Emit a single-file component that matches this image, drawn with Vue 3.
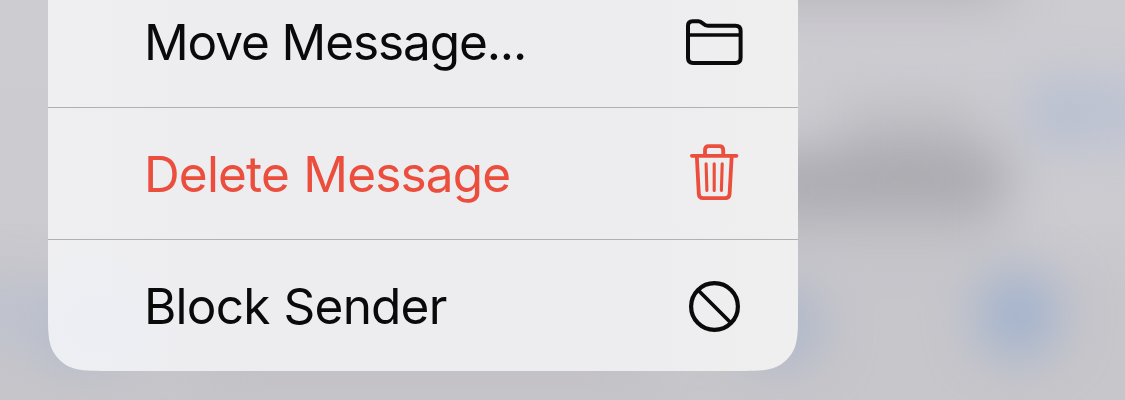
<script setup>
const items = [
  { label: 'Move Message...', icon: 'folder', cls: 'move' },
  { label: 'Delete Message', icon: 'trash', cls: 'delete' },
  { label: 'Block Sender', icon: 'block', cls: 'block' },
]
</script>

<template>
  <main class="screen">
    <svg class="backdrop" viewBox="0 0 1125 400" aria-hidden="true">
      <defs>
        <filter id="soft" x="-150%" y="-150%" width="400%" height="400%" color-interpolation-filters="sRGB">
          <feGaussianBlur stdDeviation="26" />
        </filter>
      </defs>
      <g filter="url(#soft)">
        <rect x="740" y="-60" width="270" height="60" fill="#b3b2b7" />
        <rect x="840" y="105" width="140" height="50" fill="#bcbbc0" />
        <rect x="750" y="155" width="258" height="44" fill="#a5a4aa" />
        <rect x="750" y="199" width="250" height="46" fill="#bcbbc0" />
        <rect x="1030" y="82" width="150" height="60" fill="#b6bfd3" opacity="0.75" />
        <ellipse cx="1056" cy="114" rx="22" ry="24" fill="#a9b6d0" opacity="0.7" />
        <ellipse cx="1018" cy="315" rx="40" ry="42" fill="#9fb1cd" />
        <ellipse cx="780" cy="326" rx="42" ry="38" fill="#aab5c9" />
        <ellipse cx="85" cy="332" rx="52" ry="34" fill="#b2bacb" />
        <rect x="-60" y="285" width="110" height="54" fill="#b9c0d0" opacity="0.7" />
        <rect x="200" y="350" width="450" height="28" fill="#bab9be" opacity="0.7" />
      </g>
    </svg>
    <ul class="menu">
      <li v-for="item in items" :key="item.icon" class="item" :class="item.cls">
        <span class="label">{{ item.label }}</span>
        <svg class="icon" viewBox="0 0 60 61" fill="none" stroke="currentColor" stroke-linecap="round" stroke-linejoin="round">
          <g v-if="item.icon === 'folder'" stroke-width="4">
            <path d="M4 16V14.8Q4 10.2 8.6 10.2H14.5C18.6 10.2 19.4 14.8 24 14.8H51.4Q56.6 14.8 56.6 20V46.8Q56.6 52 51.4 52H9.2Q4 52 4 46.8Z" />
            <path d="M4 24H56.6" stroke-width="3.6" stroke-linecap="butt" />
          </g>
          <g v-else-if="item.icon === 'trash'" stroke-width="3.8">
            <path d="M7.9 12.8H52.5" />
            <path d="M21 12V7Q21 3.2 24.8 3.2H35.4Q39.2 3.2 39.2 7V12" />
            <path d="M12.8 13L14.8 50.8Q15 55.1 19.3 55.1H41.2Q45.4 55.1 45.6 50.8L47.7 13" />
            <path d="M22.1 20.8L22.9 47.4M30.2 20.8V47.4M38.2 20.8L37.4 47.4" stroke-width="3.1" />
          </g>
          <g v-else>
            <circle cx="30.5" cy="31.5" r="23.4" stroke-width="4.2" />
            <path d="M14 15L47 48" stroke-width="3.8" stroke-linecap="butt" />
          </g>
        </svg>
      </li>
    </ul>
  </main>
</template>

<style>
body {
  margin: 0;
  overflow: hidden;
}
</style>

<style scoped>
.screen {
  position: relative;
  box-sizing: border-box;
  display: flex;
  align-items: flex-end;
  width: 1125px;
  height: 400px;
  padding: 0 0 29px 48px;
  overflow: hidden;
  background: linear-gradient(#cdccd1 0, #cccbd0 210px, #c7c6cb 290px, #c7c6ca 400px);
}

.backdrop {
  position: absolute;
  inset: 0;
  width: 1125px;
  height: 400px;
}

.menu {
  position: relative;
  flex: none;
  width: 750px;
  margin: 0;
  padding: 0;
  list-style: none;
  color: #0a0a0b;
  background:
    radial-gradient(160px 130px at 50px 350px, rgba(236, 238, 245, 0.9), rgba(237, 238, 243, 0.4) 50%, transparent),
    linear-gradient(90deg, #efeff1, #ededef 25%, #ededef 75%, #efeff0);
  /* continuous-curvature bottom corners */
  clip-path: path('M0 0H750V335.4C750 352.5 750 361.1 747.1 370.4C743.4 380.5 735.5 388.4 725.4 392.1C716.1 395 707.5 395 690.4 395H59.6C42.5 395 33.9 395 24.6 392.1C14.5 388.4 6.6 380.5 2.9 370.4C0 361.1 0 352.5 0 335.4Z');
}

.item {
  display: flex;
  align-items: center;
  justify-content: space-between;
  height: 131px;
  padding: 0 54px 0 96px;
  border-bottom: 1px solid #b0b0b3;
}

.item:last-child {
  border-bottom: 0;
}

.label {
  font: 400 49.5px/60px Inter, "Liberation Sans", sans-serif;
  white-space: nowrap;
}

.move .label {
  letter-spacing: -1.1px;
}

.delete {
  color: #eb4e3d;
}

.delete .label {
  letter-spacing: -0.85px;
  word-spacing: 1.4px;
}

.block .label {
  letter-spacing: -0.8px;
  word-spacing: 1px;
}

.icon {
  display: block;
  flex: none;
  width: 60px;
  height: 61px;
}
</style>
